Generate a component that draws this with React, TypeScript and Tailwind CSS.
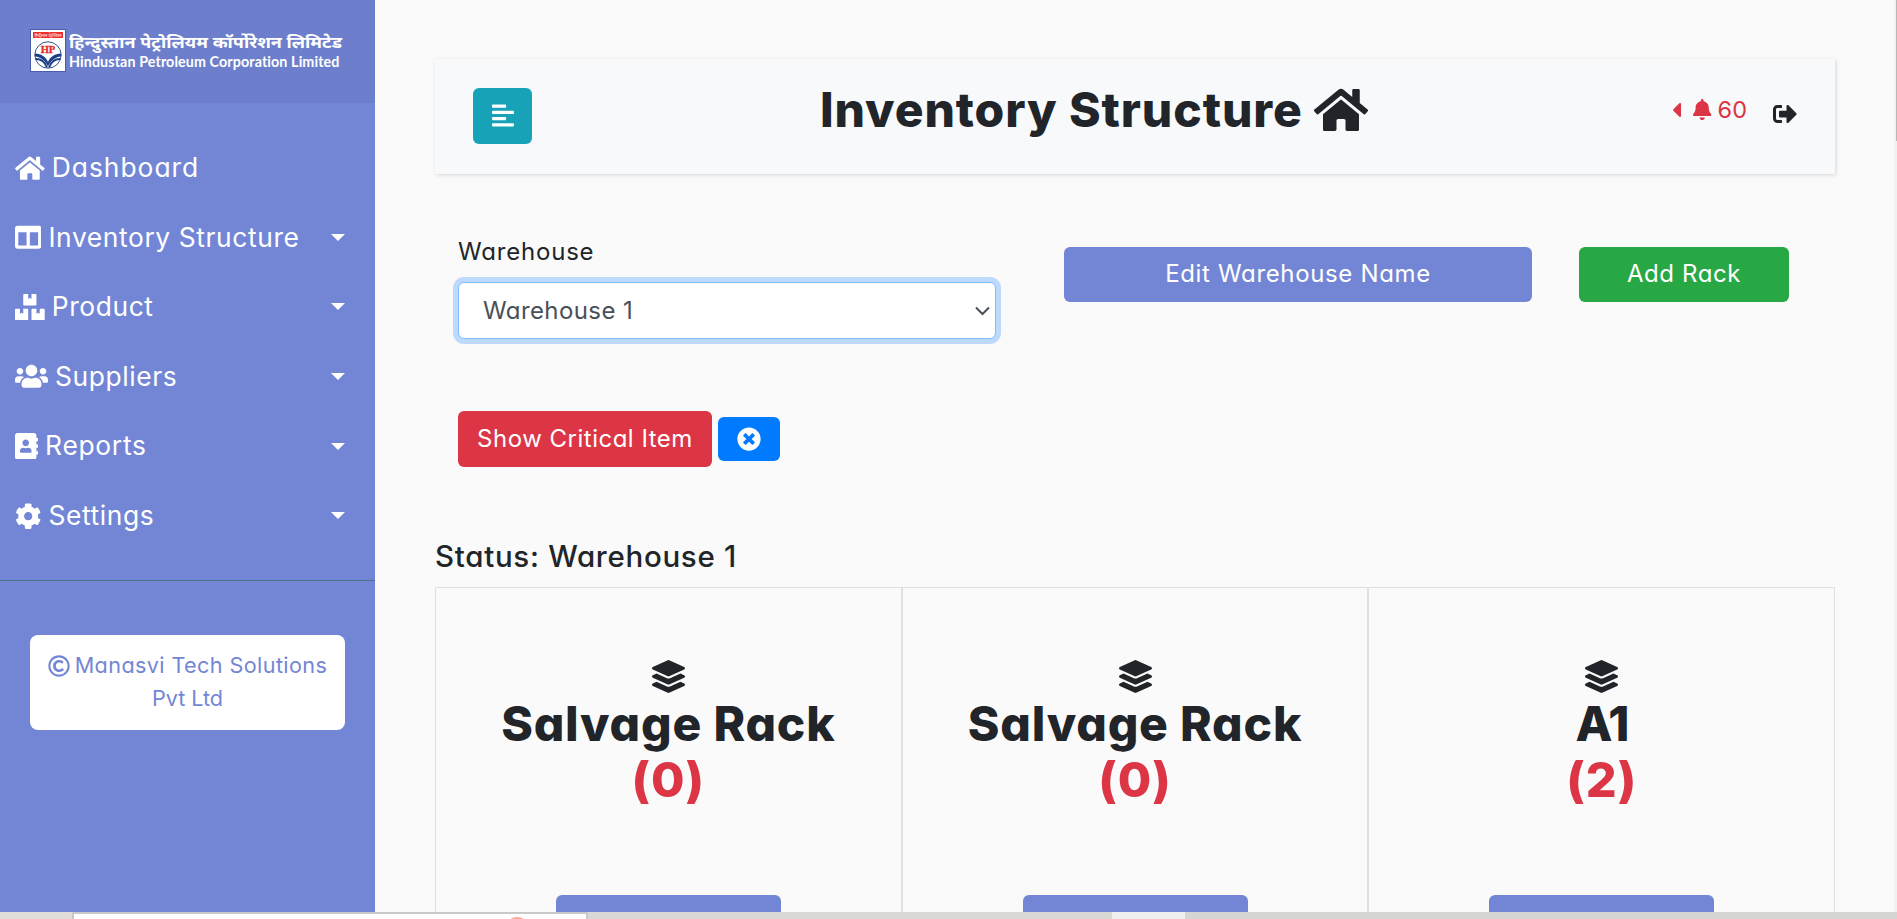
import type { ReactNode } from "react";
import {
  FaHome, FaColumns, FaBoxes, FaUsers, FaAddressBook, FaCog, FaRegCopyright,
  FaAlignLeft, FaCaretLeft, FaBell, FaSignOutAlt, FaTimesCircle, FaLayerGroup,
} from "react-icons/fa";

function Logo() {
  return (
    <div className="flex h-[103px] items-start bg-[#6d7fcc] pl-[30px] pt-[29px] text-white">
      <svg width="36" height="43" viewBox="0 0 36 43" className="shrink-0">
        <rect x="0.5" y="0.5" width="35" height="42" fill="#fff" stroke="#4a5db0" />
        <rect x="3" y="3" width="30" height="6" fill="#ee2b2b" />
        <text x="18" y="7.6" textAnchor="middle" fontSize="4.4" textLength="27" lengthAdjust="spacingAndGlyphs" fill="#fff" fontFamily="Noto Sans, sans-serif">हिन्दुस्तान पेट्रोलियम</text>
        <circle cx="18" cy="26" r="13.2" fill="#fff" stroke="#1c3f86" strokeWidth="0.9" />
        <path d="M5 24.5 C11 24.5 16 28 18 33 C20 28 25 24.5 31 24.5 L31 27.5 C25 28 20.500 32 18 37.500 C15.500 32 11 28 5 27.500Z" fill="#1c3f86" />
        <path d="M6 30 C11 30 15 33 17 38.500 M30 30 C25 30 21 33 19 38.500" fill="none" stroke="#1c3f86" strokeWidth="1.800" />
        <text x="18" y="24" textAnchor="middle" fontSize="10.500" fontWeight="700" fill="#e8282b" stroke="#e8282b" strokeWidth="0.3" fontFamily="Liberation Serif, serif">HP</text>
      </svg>
      <div className="ml-[3px] flex flex-col whitespace-nowrap">
        <div className="mt-[2px] h-[22px] origin-left scale-x-[1.09] text-[16.5px] leading-[22px] font-bold font-['Noto_Sans','Noto_Sans_Devanagari',sans-serif]">हिन्दुस्तान पेट्रोलियम कॉर्पोरेशन लिमिटेड</div>
        <div className="h-[18px] text-[14.300px] leading-[18px] font-bold tracking-[0.1px] font-['Lato',sans-serif]">Hindustan Petroleum Corporation Limited</div>
      </div>
    </div>
  );
}

function NavItem({ icon, label, caret = true, tracking }: { icon: ReactNode; label: string; caret?: boolean; tracking: string }) {
  return (
    <li className="flex h-[69.6px] items-center pl-[15px] pr-[30px] text-[26.4px] text-white">
      {icon}
      <span className={`ml-[7px] whitespace-nowrap ${tracking}`}>{label}</span>
      {caret && <span className="ml-auto border-x-[7px] border-t-[7px] border-x-transparent border-t-white" />}
    </li>
  );
}

function Rack({ name, count, tracking }: { name: string; count: number; tracking: string }) {
  return (
    <div className="flex flex-1 flex-col items-center border border-[#dee2e6] pt-[72px]">
      <FaLayerGroup className="h-[33px] w-[33px] shrink-0 text-[#212529]" />
      <h2 className={`mt-[2px] text-[48px] leading-[57px] font-extrabold text-[#212529] ${tracking}`}>{name}</h2>
      <span className="-mt-px text-[48.500px] leading-[57px] font-extrabold tracking-[1px] text-[#dc3545]">({count})</span>
      <button className="mt-[87px] h-[57px] w-[225px] shrink-0 rounded-md bg-[#7386d5]" />
    </div>
  );
}

export default function App() {
  return (
    <div className="flex h-[919px] w-[1897px] flex-col overflow-hidden bg-[#fafafa] font-['Inter',sans-serif] text-[#212529] [font-feature-settings:'cv11']">
      <div className="flex h-[912px] shrink-0 overflow-hidden">
        <aside className="flex w-[375px] shrink-0 flex-col bg-[#7386d5]">
          <Logo />
          <ul className="h-[478px] border-b border-[#47748b] pt-[30px]">
            <NavItem icon={<FaHome className="h-[26.4px] w-[29.7px] shrink-0" />} label="Dashboard" caret={false} tracking="tracking-[1px]" />
            <NavItem icon={<FaColumns className="h-[26.4px] w-[26.4px] shrink-0" />} label="Inventory Structure" tracking="tracking-[0.6px]" />
            <NavItem icon={<FaBoxes className="h-[26.4px] w-[29.7px] shrink-0" />} label="Product" tracking="tracking-[0.6px]" />
            <NavItem icon={<FaUsers className="h-[26.4px] w-[33px] shrink-0" />} label="Suppliers" tracking="tracking-[0.6px]" />
            <NavItem icon={<FaAddressBook className="h-[26.4px] w-[23.1px] shrink-0" />} label="Reports" tracking="tracking-[0.7px]" />
            <NavItem icon={<FaCog className="h-[26.4px] w-[26.4px] shrink-0" />} label="Settings" tracking="tracking-[0.6px]" />
          </ul>
          <div className="mx-[30px] mt-[54px] h-[95px] rounded-lg bg-white pt-[14px] text-center text-[21.600px] leading-[33px] text-[#7386d5]">
            <div className="flex items-center justify-center gap-[5px] whitespace-nowrap">
              <FaRegCopyright className="text-[22px]" />
              <span className="tracking-[0.4px]">Manasvi Tech Solutions</span>
            </div>
            <div>Pvt Ltd</div>
          </div>
        </aside>

        <main className="flex w-[1519px] shrink-0 flex-col pl-[60px] pr-[59px] pt-[59px]">
          <header className="flex h-[115px] shrink-0 items-start bg-[#f8f9fb] px-[38px] pt-[29px] shadow-[1px_1px_4px_rgba(0,0,0,0.15)]">
            <button className="flex h-14 w-[59px] items-center justify-center rounded-md bg-[#17a2b8] pb-[2px] text-white">
              <FaAlignLeft className="h-[25px] w-[22px]" />
            </button>
            <h1 className="-mt-[2px] ml-[288px] flex w-[560px] items-center whitespace-nowrap text-[48px] leading-[46px] font-extrabold">
              <span className="tracking-[0.9px]">Inventory Structure</span>
              <FaHome className="ml-[11px] h-[48px] w-[54px] shrink-0" />
            </h1>
            <div className="-mt-[2px] ml-auto flex items-center text-[#dc3545]">
              <FaCaretLeft className="mt-[3px] h-6 w-[9px]" />
              <FaBell className="ml-[12px] mt-[2px] h-[21px] w-[18.400px]" />
              <span className="ml-[6px] mt-[4px] text-[23.500px] leading-10">60</span>
            </div>
            <FaSignOutAlt className="ml-[26px] mt-[14px] text-2xl" />
          </header>

          <section className="flex h-[236px] shrink-0 pl-[23px] pt-[60px]">
            <div className="w-[538px]">
              <label className="block h-12 text-[24px] leading-[36px] tracking-[0.8px]">Warehouse</label>
              <div className="flex h-[57px] items-center justify-between rounded-md border border-[#80bdff] bg-white pl-[24px] pr-[5px] text-[24px] text-[#495057] shadow-[0_0_0_5px_#bddafd]">
                <span className="tracking-[0.4px]">Warehouse 1</span>
                <svg width="15" height="10" viewBox="0 0 15 10" fill="none" stroke="#495057" strokeWidth="2"><path d="M1 1.500L7.500 8L14 1.500" /></svg>
              </div>
            </div>
            <button className="ml-[68px] mt-[13px] h-[55px] w-[468px] rounded-md bg-[#7386d5] pb-[2px] text-[24px] tracking-[0.65px] text-white">Edit Warehouse Name</button>
            <button className="ml-[47px] mt-[13px] h-[55px] w-[210px] rounded-md bg-[#28a745] pb-[2px] text-[24px] tracking-[0.6px] text-white">Add Rack</button>
          </section>

          <div className="flex h-[58px] shrink-0 items-center gap-[6px] pl-[23px]">
            <button className="h-14 w-[254px] whitespace-nowrap rounded-md bg-[#dc3545] text-[24px] tracking-[0.5px] text-white">Show Critical Item</button>
            <button className="flex h-11 w-[62px] items-center justify-center rounded-md bg-[#007bff] text-2xl text-white">
              <FaTimesCircle />
            </button>
          </div>

          <h3 className="mt-[66px] h-[53px] shrink-0 text-[29.500px] leading-[45px] font-medium tracking-[0.7px]">Status: Warehouse 1</h3>
          <div className="flex h-[500px] shrink-0">
            <Rack name="Salvage Rack" count={0} tracking="tracking-[0.8px]" />
            <Rack name="Salvage Rack" count={0} tracking="tracking-[0.8px]" />
            <Rack name="A1" count={2} tracking="tracking-[-1.500px]" />
          </div>
        </main>
        <div className="w-[3px] bg-[#f1f1f1] pl-[2px]">
          <div className="h-[141px] bg-[#b8b8b8]" />
        </div>
      </div>

      <div className="flex h-[7px] shrink-0 bg-[#d6d6d4]">
        <div className="w-[72px] bg-[#e0dcd8]" />
        <div className="flex w-[516px] justify-end overflow-hidden border-x-2 border-t-2 border-[#c9c9c9] bg-white pr-[58px] pt-[3px]">
          <div className="h-5 w-[22px] shrink-0 rounded-[50%] bg-[#ffa896]" />
        </div>
        <div className="w-[524px] bg-[#dad8d5]" />
        <div className="w-[73px] bg-[#efefef]" />
      </div>
    </div>
  );
}
